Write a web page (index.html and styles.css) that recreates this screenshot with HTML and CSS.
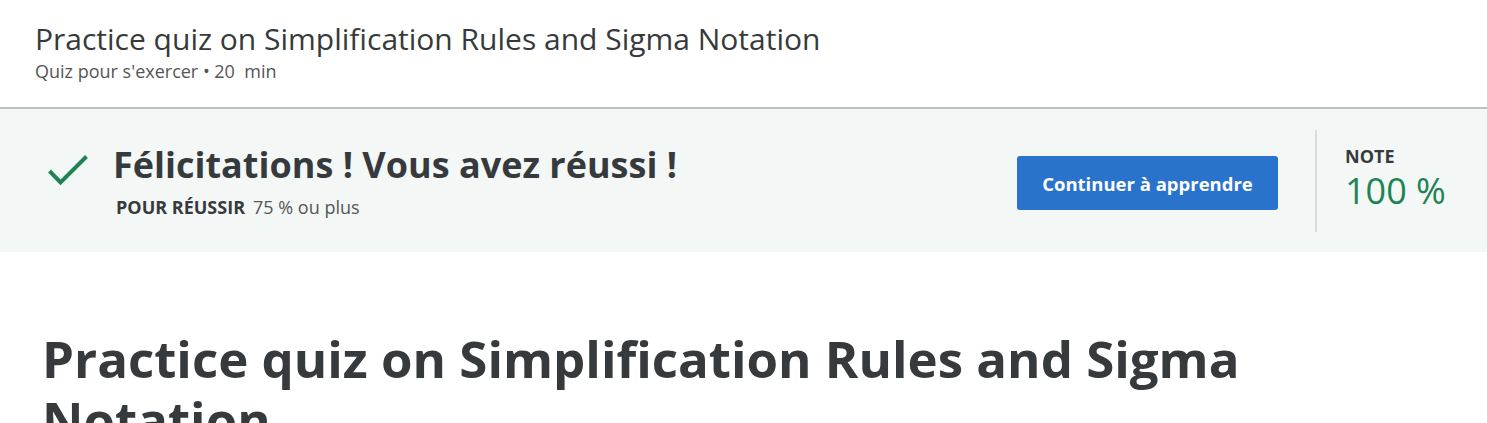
FILE: index.html
```html
<!DOCTYPE html>
<html lang="fr">
<head>
<meta charset="utf-8">
<title>Practice quiz</title>
<link rel="stylesheet" href="styles.css">
</head>
<body>
<header class="page-header">
  <h1 class="header-title">Practice quiz on Simplification Rules and Sigma Notation</h1>
  <div class="header-meta">Quiz pour s'exercer • 20&nbsp; min</div>
</header>
<section class="result-banner">
  <div class="result-main">
    <svg class="check-icon" width="42" height="32" viewBox="0 0 42 32" aria-hidden="true">
      <path d="M2.5 17 L13.5 28.5 L39.5 2.5" fill="none" stroke="#1f8354" stroke-width="4" stroke-linecap="butt" stroke-linejoin="miter"/>
    </svg>
    <div class="result-text">
      <h2 class="result-heading">Félicitations ! Vous avez réussi !</h2>
      <div class="result-req"><span class="req-label">POUR RÉUSSIR</span><span class="req-value">75 % ou plus</span></div>
    </div>
  </div>
  <div class="result-actions">
    <button class="btn-primary">Continuer à apprendre</button>
  </div>
  <div class="result-grade">
    <div class="grade-label">NOTE</div>
    <div class="grade-value">100 %</div>
  </div>
</section>
<main class="content">
  <h1 class="quiz-title">Practice quiz on Simplification Rules and Sigma Notation</h1>
</main>
</body>
</html>
```

FILE: styles.css
```css
* { box-sizing: border-box; }
html, body { margin: 0; padding: 0; }
body {
  font-family: "Open Sans", "Noto Sans", sans-serif;
  color: #373a3c;
  background: #fff;
  overflow: hidden;
}
.page-header {
  padding: 19px 35px 0;
  height: 109px;
  border-bottom: 2px solid #bcc0c0;
}
.header-title {
  margin: 0;
  font-size: 30px;
  font-weight: 400;
  line-height: 40px;
  color: #373a3c;
}
.header-meta {
  font-size: 18px;
  line-height: 24px;
  color: #555;
  margin-top: 0;
}
.result-banner {
  background: #f3f8f6;
  height: 143px;
  display: flex;
  align-items: center;
  padding: 0 0 0 47px;
}
.result-main {
  display: flex;
  align-items: flex-start;
  flex: 1;
}
.check-icon {
  margin-top: 11px;
  flex: none;
}
.result-text {
  margin-left: 24px;
}
.result-heading {
  margin: 0;
  font-size: 36px;
  font-weight: 700;
  line-height: 44px;
  color: #373a3c;
}
.result-req {
  margin-top: 8px;
  margin-left: 3px;
  font-size: 18px;
  line-height: 24px;
}
.req-label {
  font-weight: 700;
  margin-right: 8px;
}
.req-value {
  color: #555;
}
.result-actions {
  padding-right: 37px;
  padding-top: 5px;
  display: flex;
  align-items: center;
}
.btn-primary {
  font-family: inherit;
  width: 261px;
  height: 54px;
  background: #2a73cc;
  color: #fff;
  border: none;
  border-radius: 3px;
  font-size: 18.5px;
  font-weight: 700;
  padding: 0;
}
.result-grade {
  align-self: center;
  width: 172px;
  height: 102px;
  border-left: 2px solid #d9dddd;
  padding: 14px 0 0 28px;
}
.grade-label {
  font-size: 18px;
  font-weight: 700;
  line-height: 25px;
}
.grade-value {
  font-size: 36px;
  line-height: 49px;
  margin-top: -3px;
  color: #1f8354;
}
.content {
  padding: 76px 42px 0;
}
.quiz-title {
  margin: 0;
  max-width: 1260px;
  font-size: 51px;
  font-weight: 700;
  line-height: 61px;
  color: #373a3c;
}
```
